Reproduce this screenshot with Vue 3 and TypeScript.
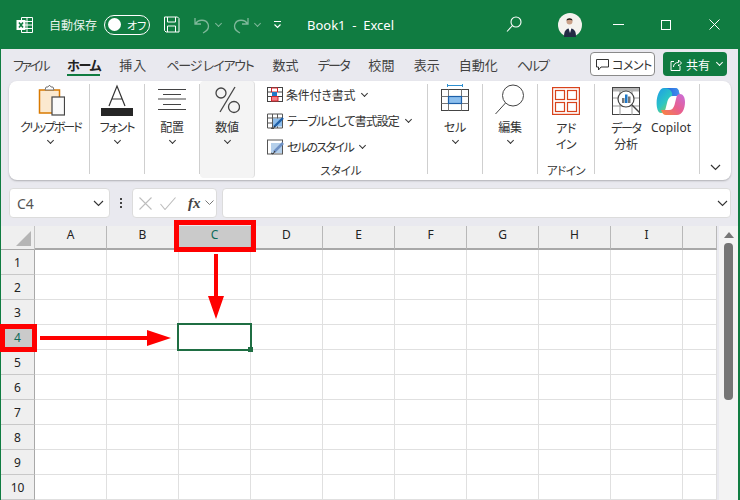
<script setup lang="ts">
const tabs = [
  { label: 'ファイル', active: false, ls: -2.5 },
  { label: 'ホーム', active: true, ls: -1.3 },
  { label: '挿入', active: false, ls: 1 },
  { label: 'ページ レイアウト', active: false, ls: -1.2 },
  { label: '数式', active: false, ls: 0 },
  { label: 'データ', active: false, ls: -1.6 },
  { label: '校閲', active: false, ls: 0.3 },
  { label: '表示', active: false, ls: 0 },
  { label: '自動化', active: false, ls: 0 },
  { label: 'ヘルプ', active: false, ls: -2 },
]
const cols = ['A', 'B', 'C', 'D', 'E', 'F', 'G', 'H', 'I', '']
const rows = [1, 2, 3, 4, 5, 6, 7, 8, 9, 10]
</script>

<template>
  <div class="window">
    <header class="titlebar">
      <svg class="t-logo" width="18" height="18" viewBox="0 0 18 18" fill="none" stroke="#fff" stroke-width="1">
        <path d="M5.5 1.5h11v15h-11zM11 1.5v15M5.5 5.500h11M5.500 9h11M5.500 12.500h11" />
        <rect x="0.5" y="4" width="9" height="10" fill="#fff" stroke="none" />
        <path d="M3 6.500l4 5M7 6.500l-4 5" stroke="#107C41" stroke-width="1.600" />
      </svg>
      <span class="t-auto">自動保存</span>
      <div class="toggle"><i class="knob"></i><span>オフ</span></div>
      <svg class="t-save" width="17" height="17" viewBox="0 0 17 17" fill="none" stroke="#fff" stroke-width="1">
        <path d="M1.500 1h13l1.500 1.500V16H3l-1.500-1.500zM4.500 1v5h8V1M4.500 16v-6h8v6" />
      </svg>
      <svg class="t-undo" width="16" height="18" viewBox="0 0 16 18" fill="none" stroke="#7FB89A" stroke-width="1.300">
        <path d="M1 2v6h6M1.500 8C4 3 12 3 14 8c1.500 4-1 7-5 9" />
      </svg>
      <span class="t-caret dim"></span>
      <svg class="t-redo" width="16" height="18" viewBox="0 0 16 18" fill="none" stroke="#7FB89A" stroke-width="1.300">
        <path d="M15 2v6H9M14.500 8C12 3 4 3 2 8c-1.500 4 1 7 5 9" />
      </svg>
      <span class="t-caret dim"></span>
      <svg class="t-custom" width="9" height="9" viewBox="0 0 9 9" fill="none" stroke="#fff" stroke-width="1.200">
        <path d="M1 1.500h7M1.500 4.500l3 3 3-3" />
      </svg>
      <span class="t-name">Book1&nbsp; -&nbsp; Excel</span>
      <svg class="t-search" width="16" height="17" viewBox="0 0 16 17" fill="none" stroke="#fff" stroke-width="1.100">
        <circle cx="10" cy="6" r="5" />
        <path d="M6.500 9.500L1 15.500" />
      </svg>
      <svg class="t-avatar" width="24" height="24" viewBox="0 0 24 24">
        <circle cx="12" cy="12" r="12" fill="#F4F2EE" />
        <path d="M6 24c0-6 1.500-8 6-9 4.500 1 6 3 6 9z" fill="#232C45" />
        <path d="M10.500 15l1.500 5 1.500-5z" fill="#fff" />
        <circle cx="11.500" cy="8.500" r="3" fill="#C9A088" />
        <path d="M8.500 7.500c0-3 6-3 6 0-2-1-4-1-6 0z" fill="#1E1A18" />
      </svg>
      <span class="t-min"></span>
      <span class="t-max"></span>
      <svg class="t-close" width="11" height="11" viewBox="0 0 11 11" stroke="#fff" stroke-width="1">
        <path d="M.5.500l10 10M10.500.500l-10 10" />
      </svg>
    </header>

    <main class="body">
      <nav class="tabbar">
        <div class="tabs">
          <span
            v-for="t in tabs"
            :key="t.label"
            class="tab"
            :class="{ active: t.active }"
            :style="{ letterSpacing: t.ls + 'px' }"
          >{{ t.label }}</span>
        </div>
        <button class="comment">
          <svg width="13" height="13" viewBox="0 0 13 13" fill="none" stroke="#333" stroke-width="1">
            <path d="M.5 1.500h12v7.500H5L2.500 12V9H.5z" />
          </svg>
          <span class="kana-s">コメント</span>
        </button>
        <button class="share">
          <svg width="12" height="13" viewBox="0 0 12 13" fill="none" stroke="#fff" stroke-width="1">
            <path d="M4 3.500H1v9h9V8M3.500 9c0-3 2-4.500 5-4.500V2L11.500 5l-3 3V6.500" />
          </svg>
          共有
          <i class="share-caret"></i>
        </button>
      </nav>

      <section class="ribbon">
        <div class="group g-clip">
          <div class="big">
            <svg class="ico" width="30" height="32" viewBox="-3 0 30 32" fill="none">
              <rect x="1.500" y="6" width="20" height="23" fill="#FBE9CF" stroke="#D97A00" stroke-width="1.500" />
              <path d="M7 6h9l-1-3h-2l-1-1.500h-1L10 3H8z" fill="#fff" stroke="#777" />
              <rect x="14" y="13" width="12.500" height="18" fill="#FAFAFA" stroke="#444" stroke-width="1.200" />
            </svg>
            <span class="lbl kana-xl">クリップボード</span>
            <i class="caret"></i>
          </div>
        </div>
        <div class="group g-narrow">
          <div class="big">
            <svg class="ico" width="32" height="32" viewBox="0 0 32 32" fill="none" stroke="#333" stroke-width="1.200">
              <path d="M8 22L16 2l8 20M11 15h10" />
              <rect x="0" y="24" width="32" height="8" fill="#262626" stroke="none" />
            </svg>
            <span class="lbl kana-l">フォント</span>
            <i class="caret"></i>
          </div>
        </div>
        <div class="group g-narrow">
          <div class="big">
            <svg class="ico" width="28" height="32" viewBox="0 0 28 32" fill="none" stroke="#444" stroke-width="1">
              <path d="M0 5.500h28M5 10.500h18M0 15h28M5 20.500h18M0 25.500h28" />
            </svg>
            <span class="lbl">配置</span>
            <i class="caret"></i>
          </div>
        </div>
        <div class="group g-narrow g-hot">
          <div class="big">
            <svg class="ico" width="26" height="32" viewBox="0 0 26 32" fill="none" stroke="#444" stroke-width="1.300">
              <circle cx="7" cy="9" r="5" />
              <circle cx="20" cy="23" r="5.500" />
              <path d="M21 3L6 28" />
            </svg>
            <span class="lbl">数値</span>
            <i class="caret"></i>
          </div>
        </div>

        <div class="group g-style">
          <div class="style-rows">
            <div class="srow">
              <svg width="16" height="15" viewBox="0 0 16 15" fill="none">
                <rect x=".5" y=".5" width="15" height="14" fill="#fff" stroke="#444" />
                <rect x="4.500" y="1" width="6" height="4" fill="#fff" stroke="#D8262C" />
                <rect x="5" y="5" width="5" height="4.500" fill="#1F78C8" />
                <rect x="4.500" y="9.500" width="6.500" height="4.500" fill="#F47F88" stroke="#D8262C" />
                <path d="M.5 5h4M.5 9.500h4M11 5h4.500M11 9.500h4.500" stroke="#444" />
              </svg>
              <span class="kana-t">条件付き書式</span><i class="caret tiny"></i>
            </div>
            <div class="srow">
              <svg width="17" height="16" viewBox="0 0 17 16" fill="none">
                <path d="M.5 1h15v14H.5zM.5 5h15M.5 10h15M5.500 1v14M10.500 1v14" stroke="#555" />
                <rect x="6" y="5.500" width="9" height="8" fill="#8DBDEB" />
                <path d="M16 5L7 14" stroke="#1F5FA8" stroke-width="2.400" />
                <path d="M8 13l-2 3-2-1" stroke="#333" />
              </svg>
              <span class="kana-m">テーブルとして書式設定</span><i class="caret tiny"></i>
            </div>
            <div class="srow">
              <svg width="17" height="16" viewBox="0 0 17 16" fill="none">
                <rect x=".5" y="1" width="15" height="14" stroke="#555" />
                <rect x="4" y="4" width="11" height="10" fill="#B4CFEA" />
                <path d="M16 4L7 13" stroke="#6D90C4" stroke-width="2.600" />
                <path d="M8 12l-2 3-2-1" stroke="#333" />
              </svg>
              <span class="kana-x">セルのスタイル</span><i class="caret tiny"></i>
            </div>
          </div>
          <span class="grp-title">スタイル</span>
        </div>

        <div class="group g-narrow">
          <div class="big">
            <svg class="ico" width="28" height="32" viewBox="0 0 28 32" fill="none">
              <path d="M6.500 1.500h15M6.500 0v3M21.500 0v3" stroke="#2D8FD0" />
              <rect x=".5" y="5.500" width="27" height="21" fill="#fff" stroke="#444" />
              <path d="M.5 12.500h27M.5 19.500h27M7.500 5.500v21M20.500 5.500v21" stroke="#777" />
              <rect x="7.500" y="12.500" width="13" height="7" fill="#8CBFEE" stroke="#1C5FA8" stroke-width="1.200" />
            </svg>
            <span class="lbl">セル</span>
            <i class="caret"></i>
          </div>
        </div>
        <div class="group g-narrow">
          <div class="big">
            <svg class="ico" width="30" height="32" viewBox="0 0 30 32" fill="none" stroke="#444" stroke-width="1">
              <circle cx="18" cy="11.500" r="10.500" />
              <path d="M10.500 19L.5 30" />
            </svg>
            <span class="lbl">編集</span>
            <i class="caret"></i>
          </div>
        </div>
        <div class="group g-addin">
          <div class="big">
            <svg class="ico" width="28" height="32" viewBox="0 0 28 32" fill="none" stroke="#D8431C" stroke-width="1.200">
              <rect x=".6" y="3.600" width="26.800" height="26.800" />
              <rect x="3.500" y="6.500" width="9" height="9" />
              <rect x="15.500" y="6.500" width="9" height="9" />
              <rect x="3.500" y="18.500" width="9" height="9" />
              <rect x="15.500" y="18.500" width="9" height="9" />
            </svg>
            <span class="lbl two kana-s">アド<br />イン</span>
          </div>
          <span class="grp-title kana-s">アドイン</span>
        </div>
        <div class="group g-tools">
          <div class="big tool">
            <svg class="ico" width="28" height="32" viewBox="0 0 28 32" fill="none">
              <rect x=".5" y="3.500" width="27" height="27" fill="#fff" stroke="#444" />
              <rect x="1" y="4" width="26" height="3.500" fill="#B5B5B5" />
              <path d="M1 14h26M1 22h26M8 7v24M20 7v24" stroke="#999" />
              <circle cx="14" cy="15" r="8" fill="#fff" stroke="#444" stroke-width="1.200" />
              <path d="M20 21l8 8" stroke="#444" stroke-width="1.400" />
              <rect x="10" y="14" width="2.500" height="5" fill="#777" />
              <rect x="13" y="10.500" width="2.500" height="8.500" fill="#1F78C8" />
              <rect x="16" y="12.500" width="2.500" height="6.500" fill="#777" />
            </svg>
            <span class="lbl two"><span class="kana-l">データ</span><br />分析</span>
          </div>
          <div class="big tool">
            <svg class="ico" width="30" height="32" viewBox="0 0 30 32">
              <defs>
                <linearGradient id="cpA" x1="0" y1="0" x2="1" y2="1">
                  <stop offset="0" stop-color="#1E9BE8" />
                  <stop offset=".45" stop-color="#2BC6C4" />
                  <stop offset=".8" stop-color="#9CCB3C" />
                  <stop offset="1" stop-color="#F7C23A" />
                </linearGradient>
                <linearGradient id="cpB" x1="1" y1="0" x2="0" y2="1">
                  <stop offset="0" stop-color="#C86DDD" />
                  <stop offset=".5" stop-color="#E95F8F" />
                  <stop offset="1" stop-color="#F9873A" />
                </linearGradient>
                <linearGradient id="cpC" x1="0" y1="0" x2="1" y2="0">
                  <stop offset="0" stop-color="#1766D8" />
                  <stop offset="1" stop-color="#4A8FF0" />
                </linearGradient>
              </defs>
              <path d="M8 4h11c2.500 0 3.500 1.500 4 4l1 4h-7c-3 0-4.500 2-5.500 5l-2 8c-.6 2-2 4-4.500 4C2 29 .6 24 .6 19 .6 12 3.500 4 8 4z" fill="url(#cpA)" />
              <path d="M8 4h11c2.500 0 3.500 1.500 4 4l1 4h-8c1-3-1-8-8-8z" fill="url(#cpC)" />
              <path d="M24 10c3 0 5 3 5 8 0 7-3 13-8 13H10c-2.500 0-3.500-1.500-4-3l-1-2h8c3 0 4.500-2 5.500-5l2-8C21 11 22 10 24 10z" fill="url(#cpB)" />
            </svg>
            <span class="lbl two latin">Copilot</span>
          </div>
        </div>
        <div class="group g-last">
          <svg width="11" height="7" viewBox="0 0 11 7" fill="none" stroke="#333" stroke-width="1.200">
            <path d="M1 1l4.500 4.500L10 1" />
          </svg>
        </div>
      </section>

      <section class="formula">
        <div class="namebox">
          <span>C4</span>
          <svg width="11" height="7" viewBox="0 0 11 7" fill="none" stroke="#333" stroke-width="1.100">
            <path d="M1 1l4.500 4.500L10 1" />
          </svg>
        </div>
        <div class="dots"><i></i><i></i><i></i></div>
        <div class="fx-box">
          <svg width="13" height="13" viewBox="0 0 13 13" stroke="#BDBDBD" stroke-width="1.100">
            <path d="M.5.500l12 12M12.500.500l-12 12" />
          </svg>
          <svg width="16" height="13" viewBox="0 0 16 13" fill="none" stroke="#BDBDBD" stroke-width="1.100">
            <path d="M.5 7l4.500 5.500L15.500.500" />
          </svg>
          <span class="fx">fx</span>
          <svg width="9" height="6" viewBox="0 0 9 6" fill="none" stroke="#777" stroke-width="1">
            <path d="M.5.500l4 4 4-4" />
          </svg>
        </div>
        <div class="input">
          <svg width="11" height="7" viewBox="0 0 11 7" fill="none" stroke="#333" stroke-width="1.100">
            <path d="M1 1l4.500 4.500L10 1" />
          </svg>
        </div>
      </section>

      <section class="sheet">
        <div class="grid">
          <div class="corner"><i></i></div>
          <div v-for="c in cols" :key="'c' + c" class="colhead" :class="{ sel: c === 'C' }">{{ c }}</div>
          <template v-for="r in rows" :key="'r' + r">
            <div class="rowhead" :class="{ sel: r === 4 }">{{ r }}</div>
            <div v-for="c in cols" :key="r + c" class="cell"></div>
          </template>
        </div>
        <aside class="scroll">
          <i class="up"></i>
          <i class="thumb"></i>
        </aside>
      </section>
    </main>

    <div class="cursor"><i class="handle"></i></div>
    <div class="mark mark-col"></div>
    <div class="mark mark-row"></div>
    <svg class="arrows" width="740" height="274" viewBox="0 226 740 274">
      <path d="M214 254h4v42h6l-8 23-8-23h6z" fill="#FF0000" />
      <path d="M40 336h107v-6l24 8-24 8v-6H40z" fill="#FF0000" />
    </svg>
  </div>
</template>

<style>
html, body { margin: 0; background: #107C41; }
</style>

<style scoped>
.window {
  width: 740px;
  height: 500px;
  overflow: hidden;
  background: #107C41;
  font-family: "Noto Sans CJK JP", "Noto Sans", sans-serif;
  font-feature-settings: "palt";
  color: #333;
  display: flex;
  flex-direction: column;
  position: relative;
}
i { display: block; }

/* title bar */
.titlebar {
  height: 49px;
  flex: none;
  display: flex;
  align-items: center;
  color: #fff;
  font-size: 12px;
}
.t-logo { margin-left: 16px; flex: none; }
.t-auto { margin-left: 15px; width: 49px; white-space: nowrap; color: #E8F3EC; }
.toggle {
  margin-left: 6px;
  width: 46px;
  height: 20px;
  box-sizing: border-box;
  border: 1px solid #fff;
  border-radius: 10px;
  display: flex;
  align-items: center;
  gap: 6px;
  padding-left: 3px;
  font-size: 11px;
}
.knob { width: 13px; height: 13px; border-radius: 50%; background: #fff; }
.t-save { margin-left: 13px; flex: none; }
.t-undo { margin-left: 14px; flex: none; }
.t-caret {
  width: 4px;
  height: 4px;
  margin-left: 6px;
  margin-top: -3px;
  border-right: 1px solid #7FB89A;
  border-bottom: 1px solid #7FB89A;
  transform: rotate(45deg);
}
.t-redo { margin-left: 12px; flex: none; }
.t-custom { margin-left: 13px; flex: none; }
.t-name { margin-left: 25px; width: 96px; white-space: nowrap; font-size: 13px; font-family: "Noto Sans", sans-serif; }
.t-search { margin-left: 103px; flex: none; }
.t-avatar { margin-left: 36px; flex: none; }
.t-min { margin-left: 31px; width: 11px; height: 1px; background: #fff; }
.t-max { margin-left: 37px; width: 8px; height: 8px; border: 1px solid #fff; }
.t-close { margin-left: 38px; flex: none; }

/* body */
.body {
  flex: 1;
  min-height: 0;
  margin: 0 2px 0 1px;
  background: #E9E9EF;
  display: flex;
  flex-direction: column;
}
.tabbar {
  height: 30px;
  flex: none;
  display: flex;
  align-items: center;
  padding-left: 12px;
  font-size: 12px;
}
.tabs { display: flex; gap: 19px; width: 577px; height: 30px; font-size: 13px; }
.tab { line-height: 32px; height: 27px; white-space: nowrap; box-sizing: border-box; color: #424242; }
.tab.active { font-weight: 700; color: #222; border-bottom: 2px solid #107C41; }
.comment {
  width: 65px;
  height: 24px;
  box-sizing: border-box;
  margin: 0 8px 0 0;
  padding: 0 0 0 5px;
  display: flex;
  align-items: center;
  gap: 3px;
  background: #fff;
  border: 1px solid #8A8A8A;
  border-radius: 4px;
  font: inherit;
  font-size: 12px;
  color: #333;
  white-space: nowrap;
}
.share {
  width: 64px;
  height: 24px;
  margin: 0;
  padding: 0 0 0 7px;
  display: flex;
  align-items: center;
  gap: 4px;
  background: #107C41;
  border: 0;
  border-radius: 4px;
  font: inherit;
  font-size: 12px;
  color: #fff;
  white-space: nowrap;
}
.share-caret {
  width: 4px;
  height: 4px;
  margin: -3px 0 0 3px;
  border-right: 1px solid #fff;
  border-bottom: 1px solid #fff;
  transform: rotate(45deg);
}

/* ribbon */
.ribbon {
  margin: 2px 7px 0 8px;
  height: 99px;
  flex: none;
  box-sizing: border-box;
  background: #fff;
  border-radius: 8px;
  box-shadow: 0 1px 2px rgba(0, 0, 0, .25);
  display: flex;
  padding-top: 3px;
  font-size: 12px;
}
.group {
  position: relative;
  flex: none;
  height: 90px;
  box-sizing: border-box;
  border-right: 1px solid #CFCFCF;
  display: flex;
  justify-content: center;
}
.g-clip { width: 81px; padding-left: 3px; }
.g-narrow { width: 55px; }
.g-hot { background: #F4F4F4; border-radius: 4px; margin-top: -3px; height: 97px; padding-top: 3px; }
.g-hot { margin-bottom: -4px; border-right-color: #DDD; }
.g-style { width: 173px; display: block; padding: 0 0 0 12px; }
.g-addin { width: 57px; }
.g-tools { width: 105px; justify-content: flex-start; padding-left: 13px; gap: 9px; }
.g-tools .tool { width: 36px; }
.g-last { flex: 1; border-right: 0; align-items: flex-end; padding-bottom: 3px; }
.big {
  display: flex;
  flex-direction: column;
  align-items: center;
  white-space: nowrap;
  color: #333;
}
.ico { height: 32px; flex: none; }
.lbl { margin-top: 3px; line-height: 16px; font-size: 12px; letter-spacing: -.2px; }
.lbl.two { text-align: center; margin-top: 4px; line-height: 16px; }
.lbl.kana-xl { letter-spacing: -1.9px; }
.lbl.kana-l, .kana-l { letter-spacing: -1.2px; }
.kana-x { letter-spacing: -1.6px; }
.kana-m { letter-spacing: -1.050px; }
.kana-t { letter-spacing: -.2px; }
.lbl.kana-s, .kana-s { letter-spacing: -.5px; }
.latin { font-family: "Noto Sans", sans-serif; font-size: 12px; letter-spacing: 0; }
.caret {
  width: 4px;
  height: 4px;
  margin-top: 3px;
  border-right: 1px solid #333;
  border-bottom: 1px solid #333;
  transform: rotate(45deg);
}
.caret.tiny { margin: -2px 0 0 4px; }
.style-rows { display: flex; flex-direction: column; gap: 5px; }
.srow { display: flex; align-items: center; height: 21px; white-space: nowrap; gap: 3px; font-size: 12px; }
.grp-title {
  position: absolute;
  left: 0;
  right: 0;
  bottom: -4px;
  text-align: center;
  font-size: 11.5px;
  line-height: 16px;
  white-space: nowrap;
}

/* formula bar */
.formula {
  height: 30px;
  flex: none;
  margin: 8px 7px 0 8px;
  display: flex;
  align-items: stretch;
}
.namebox, .fx-box, .input {
  background: #fff;
  border: 1px solid #DCDCDC;
  border-radius: 4px;
  box-sizing: border-box;
  display: flex;
  align-items: center;
}
.namebox {
  width: 101px;
  padding: 0 5px 0 7px;
  justify-content: space-between;
  font-family: "Noto Sans", sans-serif;
  font-size: 14px;
  color: #555;
}
.dots { width: 22px; display: flex; flex-direction: column; align-items: center; justify-content: center; gap: 2px; }
.dots i { width: 2px; height: 2px; background: #444; }
.fx-box { width: 85px; padding-left: 6px; }
.fx-box svg:nth-child(2) { margin-left: 8px; }
.fx {
  margin-left: 12px;
  font-family: "Liberation Serif", serif;
  font-style: italic;
  font-weight: 700;
  font-size: 15px;
  color: #444;
}
.fx-box svg:last-child { margin-left: 4px; }
.input { flex: 1; margin-left: 5px; justify-content: flex-end; padding-right: 2px; }

/* sheet */
.sheet {
  flex: 1;
  min-height: 0;
  margin-top: 8px;
  display: flex;
  overflow: hidden;
}
.grid {
  width: 716px;
  flex: none;
  display: grid;
  grid-template-columns: 34px repeat(9, 72px) 34px;
  grid-auto-rows: 25px;
  grid-template-rows: 24px;
  align-content: start;
  background: #fff;
  overflow: hidden;
  font-family: "Noto Sans", sans-serif;
  font-size: 12px;
  color: #222;
}
.corner {
  background: #EFEFEF;
  border-bottom: 1px solid #A8A8A8;
  border-right: 1px solid #C4C4C4;
  position: relative;
}
.corner i {
  position: absolute;
  right: 3px;
  bottom: 3px;
  border-style: solid;
  border-width: 0 0 15px 15px;
  border-color: transparent transparent #B5B5B5 transparent;
}
.colhead {
  background: #EFEFEF;
  border-right: 1px solid #B8B8B8;
  border-bottom: 2px solid #A8A8A8;
  text-align: center;
  line-height: 17px;
  box-sizing: border-box;
}
.colhead.sel { background: #CACACA; color: #0F6B5A; }
.rowhead {
  background: #EFEFEF;
  border-right: 1px solid #A8A8A8;
  border-bottom: 1px solid #C8C8C8;
  box-sizing: border-box;
  text-align: center;
  line-height: 26px;
}
.rowhead.sel { background: #CACACA; color: #0F6B5A; }
.cell {
  border-right: 1px solid #E0E0E0;
  border-bottom: 1px solid #E0E0E0;
  box-sizing: border-box;
}
.scroll {
  flex: 1;
  margin-left: 2px;
  background: #F3F3F3;
  display: flex;
  flex-direction: column;
  align-items: center;
  position: relative;
}
.up {
  margin-top: 6px;
  border-style: solid;
  border-width: 0 5px 6px 5px;
  border-color: transparent transparent #777 transparent;
}
.thumb {
  margin-top: 5px;
  width: 9px;
  height: 157px;
  background: #757575;
  border-radius: 4px;
}

/* overlays */
.cursor {
  position: absolute;
  left: 177px;
  top: 323px;
  width: 75px;
  height: 28px;
  box-sizing: border-box;
  border: 2px solid #1F6E43;
}
.handle {
  position: absolute;
  right: -3px;
  bottom: -3px;
  width: 5px;
  height: 5px;
  background: #1F6E43;
}
.mark {
  position: absolute;
  box-sizing: border-box;
  border: 5px solid #FF0000;
}
.mark-col { left: 174px; top: 220px; width: 82px; height: 32px; }
.mark-row { left: 0; top: 324px; width: 37px; height: 28px; }
.arrows { position: absolute; left: 0; bottom: 0; pointer-events: none; }
</style>
